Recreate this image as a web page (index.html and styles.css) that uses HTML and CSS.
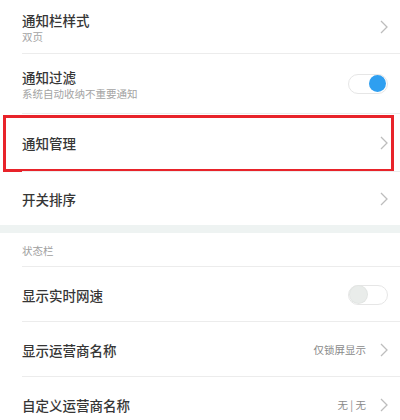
FILE: index.html
```html
<!DOCTYPE html>
<html lang="zh-CN">
<head>
<meta charset="utf-8">
<link rel="stylesheet" href="styles.css">
</head>
<body>
<div class="page">
  <div class="group">
    <div class="row row-1 divided">
      <div class="text">
        <div class="title">通知栏样式</div>
        <div class="sub">双页</div>
      </div>
      <svg class="chev" viewBox="0 0 8 14"><polyline points="1,1 7,7 1,13"/></svg>
    </div>
    <div class="row row-2 divided">
      <div class="text">
        <div class="title">通知过滤</div>
        <div class="sub">系统自动收纳不重要通知</div>
      </div>
      <div class="toggle on"><span class="knob"></span></div>
    </div>
    <div class="row row-3 divided">
      <div class="text"><div class="title">通知管理</div></div>
      <svg class="chev" viewBox="0 0 8 14"><polyline points="1,1 7,7 1,13"/></svg>
      <div class="highlight"></div>
    </div>
    <div class="row row-4">
      <div class="text"><div class="title">开关排序</div></div>
      <svg class="chev" viewBox="0 0 8 14"><polyline points="1,1 7,7 1,13"/></svg>
    </div>
  </div>
  <div class="band"></div>
  <div class="group">
    <div class="header divided">状态栏</div>
    <div class="row row-s divided">
      <div class="text"><div class="title">显示实时网速</div></div>
      <div class="toggle off"><span class="knob"></span></div>
    </div>
    <div class="row row-s divided">
      <div class="text"><div class="title">显示运营商名称</div></div>
      <span class="value">仅锁屏显示</span>
      <svg class="chev" viewBox="0 0 8 14"><polyline points="1,1 7,7 1,13"/></svg>
    </div>
    <div class="row row-s">
      <div class="text"><div class="title">自定义运营商名称</div></div>
      <span class="value">无 | 无</span>
      <svg class="chev" viewBox="0 0 8 14"><polyline points="1,1 7,7 1,13"/></svg>
    </div>
  </div>
</div>
</body>
</html>
```

FILE: styles.css
```css
html, body {
  margin: 0;
  padding: 0;
  background: #ffffff;
}
body {
  font-family: "Noto Sans CJK SC", "Noto Sans", sans-serif;
  width: 400px;
  height: 420px;
  overflow: hidden;
}
.page {
  display: flex;
  flex-direction: column;
}
.group {
  display: flex;
  flex-direction: column;
}
.row {
  position: relative;
  display: flex;
  align-items: center;
  padding: 0 12px 0 22px;
  box-sizing: border-box;
}
.divided::after {
  content: "";
  position: absolute;
  left: 22px;
  right: 0;
  bottom: 0;
  height: 1px;
  background: #ececec;
}
.row-1 { height: 54px; }
.row-2 { height: 60px; }
.row-3 { height: 58px; }
.row-4 { height: 53px; }
.row-s { height: 55px; }
.text {
  flex: 1;
  display: flex;
  flex-direction: column;
}
.title {
  font-size: 13.5px;
  line-height: 18px;
  color: #363636;
  font-weight: 500;
}
.sub {
  font-size: 10.5px;
  line-height: 14px;
  color: #a3a3a3;
  margin-top: 1px;
}
.chev {
  width: 8px;
  height: 14px;
  fill: none;
  stroke: #bdbdbd;
  stroke-width: 1.3;
}
.value {
  font-size: 10.5px;
  color: #8a8a8a;
  margin-right: 14px;
}
.toggle {
  width: 40px;
  height: 20px;
  border-radius: 10px;
  box-sizing: border-box;
  border: 1px solid #e6e6e6;
  background: #ffffff;
  display: flex;
  align-items: center;
  padding: 0 1px;
}
.toggle.on { justify-content: flex-end; margin-top: -1px; }
.toggle.off { justify-content: flex-start; }
.knob {
  width: 17px;
  height: 17px;
  border-radius: 50%;
}
.toggle.on .knob { background: #2f9ff0; }
.toggle.off .knob {
  background: #e9ecea;
  box-shadow: 0 0 0 1px #e2e5e3;
}
.highlight {
  position: absolute;
  left: 3px;
  right: 6px;
  top: 1px;
  bottom: 0;
  border: 3px solid #e8232a;
  pointer-events: none;
}
.band {
  height: 8px;
  background: #eef3f2;
}
.header {
  position: relative;
  height: 34px;
  padding-left: 22px;
  display: flex;
  align-items: center;
  font-size: 10.5px;
  color: #a0a0a0;
}
```
